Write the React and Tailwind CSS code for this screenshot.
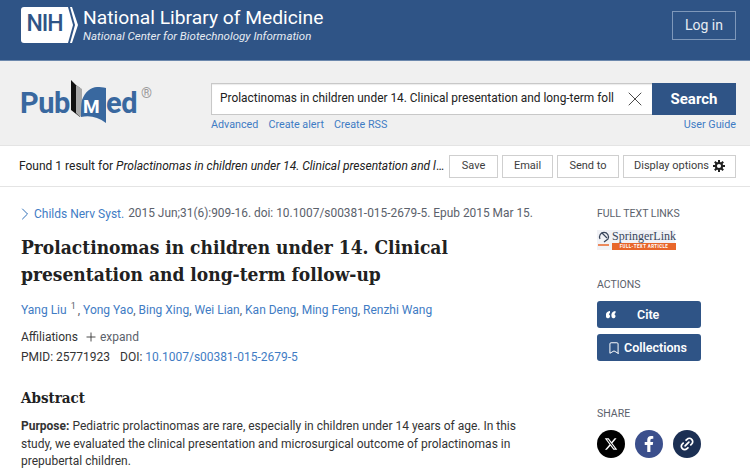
import React from "react";
import { X, Plus, ChevronRight, Bookmark, Link2 } from "lucide-react";

const sans = "font-['Roboto','Liberation_Sans',sans-serif]";
const serif = "font-['DejaVu_Serif_Condensed','DejaVu_Serif',serif]";

const authors = ["Yong Yao", "Bing Xing", "Wei Lian", "Kan Deng", "Ming Feng", "Renzhi Wang"];

const NihLogo = () => (
  <div className="flex h-[36px] w-[57px] items-stretch">
    <div className="flex w-[44px] items-center justify-center rounded-l-[3px] bg-white pl-[3px]">
      <span className="text-[23px] font-medium tracking-[-1px] text-[#2f5486]">NIH</span>
    </div>
    <svg width="14" height="36" viewBox="0 0 14 36" className="-ml-px">
      <path d="M0 0h4l5 18-5 18H0z" fill="#fff" />
      <path d="M6 0h2l6 18-6 18H6l5-18z" fill="#fff" />
    </svg>
  </div>
);

const PubMedLogo = () => (
  <div className="-ml-[1px] -mt-[3px] flex items-end text-[#39689f]">
    <span className="w-[49px] text-[29px] font-bold leading-[36px] tracking-[-0.5px]">Pub</span>
    <div className="relative -mb-[2px] h-[43px] w-[37px] shrink-0">
      <svg width="37" height="43" viewBox="0 0 37 43" className="absolute left-0 top-0">
        <path d="M2 0l5 5 4 3v29l-9-7z" fill="#111" />
        <path d="M7 5l6 4v26l-2 2-4-4z" fill="#a8a8a8" />
        <path d="M12 37c0-7 0-12 1-17 3-8 9-13 15-13 3 0 6 0 9 1v35c-8-6-16-8-25-6z" fill="#39689f" />
      </svg>
      <span className="absolute left-[14px] top-[16px] text-[19px] font-bold leading-[22px] text-white">M</span>
    </div>
    <span className="text-[29px] font-bold leading-[36px] tracking-[-0.5px]">ed</span>
    <span className="mb-[20px] ml-[4px] text-[14px] leading-[16px] text-[#9a9a9a]">®</span>
  </div>
);

const GearIcon = () => (
  <svg width="12" height="12" viewBox="0 0 12 12">
    <circle cx="6" cy="6" r="3.1" fill="none" stroke="#212121" strokeWidth="2" />
    <path d="M6 0v3M6 9v3M0 6h3M9 6h3M1.8 1.8l2 2M8.2 8.2l2 2M1.8 10.2l2-2M8.2 3.8l2-2" stroke="#212121" strokeWidth="2" />
  </svg>
);

const ToolButton = ({ children, width }) => (
  <button className={`flex h-[23px] items-center justify-center gap-[4px] border border-[#cfcfcf] bg-white text-[11px] text-[#3d3d3d] ${width}`}>
    {children}
  </button>
);

const ActionButton = ({ children }) => (
  <button className="flex h-[27px] w-[104px] items-center rounded-[3px] bg-[#2f5486] pt-px text-[12.5px] font-semibold text-white">
    {children}
  </button>
);

const SideHeading = ({ children }) => (
  <h3 className="text-[10.5px] font-normal leading-[14px] text-[#5b616b]">{children}</h3>
);

export default function App() {
  return (
    <div className={`h-[476px] w-[750px] overflow-hidden bg-white ${sans}`}>
      {/* NLM bar */}
      <header className="flex h-[61px] items-center justify-between border-b border-[#6c88ad] bg-[#2f5486] pl-[21px] pr-[14px]">
        <div className="flex items-center gap-[5px] pb-[11px]">
          <NihLogo />
          <div className="text-white">
            <div className="text-[19.25px] leading-[22px]">National Library of Medicine</div>
            <div className="text-[11.5px] italic leading-[14px] text-[#e6ebf2]">National Center for Biotechnology Information</div>
          </div>
        </div>
        <button className="mb-[10px] h-[29px] w-[64px] border border-[#7f98ba] text-[14px] text-[#e6ebf2]">Log in</button>
      </header>

      {/* Search band */}
      <section className="flex h-[85px] border-b border-[#e4e4e4] bg-[#f0f0f0] pl-[21px] pr-[14px] pt-[22px]">
        <div className="w-[190px]">
          <PubMedLogo />
        </div>
        <div className="flex-1">
          <div className="flex h-[32px]">
            <div className="flex min-w-0 flex-1 items-center overflow-hidden border-y border-l border-[#c8c8c8] bg-white pl-[8px] shadow-[inset_0_1px_1px_rgba(0,0,0,0.08)]">
              <span className="w-[396px] shrink-0 overflow-hidden whitespace-nowrap text-[11.9px] text-[#212121]">
                Prolactinomas in children under 14. Clinical presentation and long-term foll
              </span>
              <X size={24} strokeWidth={1} className="ml-[7px] shrink-0 text-[#4a4a4a]" />
            </div>
            <button className="h-[32px] w-[84px] shrink-0 bg-[#2f5486] text-[15px] font-bold text-white">Search</button>
          </div>
          <div className="mt-[3px] flex justify-between text-[10.75px] leading-[14px] text-[#3f7cc4]">
            <div className="flex gap-[10px]">
              <span>Advanced</span>
              <span>Create alert</span>
              <span>Create RSS</span>
            </div>
            <span>User Guide</span>
          </div>
        </div>
      </section>

      {/* Results toolbar */}
      <section className="flex h-[41px] items-center border-b border-[#e4e4e4] pl-[19px] pr-[14px]">
        <p className="w-[430px] shrink-0 truncate text-[12px] text-[#212121]">
          Found 1 result for <em>Prolactinomas in children under 14. Clinical presentation and long-term follow-up</em>
        </p>
        <div className="flex gap-[4px]">
          <ToolButton width="w-[49px]">Save</ToolButton>
          <ToolButton width="w-[51px]">Email</ToolButton>
          <ToolButton width="w-[62px]">Send to</ToolButton>
          <ToolButton width="w-[113px]">
            Display options <GearIcon />
          </ToolButton>
        </div>
      </section>

      <main className="flex pl-[21px]">
        {/* Article */}
        <article className="w-[576px] pt-[19px]">
          <div className="flex h-[16px] items-center whitespace-nowrap text-[12px] text-[#5b616b]">
            <ChevronRight size={20} strokeWidth={1.2} className="-ml-[6px] -mr-[1px] text-[#2f6fb8]" />
            <span className="text-[#3f7cc4]">Childs Nerv Syst.</span>
            <span className="ml-[4px] text-[11.9px]">2015 Jun;31(6):909-16. doi: 10.1007/s00381-015-2679-5. Epub 2015 Mar 15.</span>
          </div>
          <h1 className={`mt-[12px] w-[450px] text-[19px] font-bold leading-[27px] text-[#212121] ${serif}`}>
            Prolactinomas in children under 14. Clinical presentation and long-term follow-up
          </h1>
          <div className="mt-[14px] flex h-[16px] items-center whitespace-nowrap text-[12px] text-[#3f7cc4]">
            <span>Yang Liu</span>
            <sup className="ml-[2px] bg-[#f4f4f4] px-[2px] text-[9px] text-[#5b616b]">1</sup>
            {authors.map((name) => (
              <span key={name} className="whitespace-pre"><span className="text-[#5b616b]">, </span>{name}</span>
            ))}
          </div>
          <div className="mt-[11px] flex h-[15px] items-center text-[12px] text-[#333]">
            Affiliations
            <Plus size={14} strokeWidth={1.5} className="ml-[6px] mr-[2px]" />
            <span className="text-[#5b616b]">expand</span>
          </div>
          <div className="mt-[5px] flex h-[15px] items-center whitespace-nowrap text-[12px] text-[#333]">
            PMID: 25771923
            <span className="ml-[10px]">DOI:</span>
            <span className="ml-[3px] text-[#3f7cc4]">10.1007/s00381-015-2679-5</span>
          </div>
          <h2 className={`mt-[24px] text-[15px] font-bold leading-[20px] text-[#212121] ${serif}`}>Abstract</h2>
          <p className="mt-[10px] w-[505px] text-[12px] leading-[17.5px] text-[#333]">
            <strong>Purpose:</strong> Pediatric prolactinomas are rare, especially in children under 14 years of age. In this study, we evaluated the clinical presentation and microsurgical outcome of prolactinomas in prepubertal children.
          </p>
        </article>

        {/* Sidebar */}
        <aside className="pt-[20px]">
          <SideHeading>FULL TEXT LINKS</SideHeading>
          <div className="mt-[9px] flex h-[20px] w-[78px] items-stretch bg-[#f1f2f6]">
            <svg width="15" height="20" viewBox="0 0 15 20" className="shrink-0">
              <path d="M3 9a4.5 4.5 0 1 1 8 0l-4 3M5 3l5 5" fill="none" stroke="#39465c" strokeWidth="1.2" />
              <path d="M1 15h11" stroke="#e8662a" strokeWidth="1.5" />
            </svg>
            <div className="flex flex-1 flex-col items-stretch">
              <span className="font-['Liberation_Serif',serif] text-[12px] leading-[13px] text-[#39465c]">SpringerLink</span>
              <span className="h-[7px] bg-[#e8662a] text-center text-[4.5px] font-bold leading-[7px] tracking-[0.4px] text-white">FULL-TEXT ARTICLE</span>
            </div>
          </div>
          <div className="mt-[28px]">
            <SideHeading>ACTIONS</SideHeading>
          </div>
          <div className="mt-[9px] flex flex-col gap-[6px]">
            <ActionButton>
              <svg width="10" height="8" viewBox="0 0 10 8" fill="#fff" className="ml-[9px] mr-[21px]">
                <path d="M0 5a4 4 0 0 1 4-5v2a2 2 0 0 0-1 1.5A2 2 0 1 1 0 5zM5.5 5a4 4 0 0 1 4-5v2a2 2 0 0 0-1 1.5A2 2 0 1 1 5.5 5z" />
              </svg>
              Cite
            </ActionButton>
            <ActionButton>
              <Bookmark size={14} strokeWidth={1.7} className="ml-[10px] mr-[3px]" />
              Collections
            </ActionButton>
          </div>
          <div className="mt-[46px]">
            <SideHeading>SHARE</SideHeading>
          </div>
          <div className="mt-[9px] flex gap-[10px]">
            <div className="flex h-[28px] w-[28px] items-center justify-center rounded-full bg-black">
              <svg width="14" height="14" viewBox="0 0 24 24" fill="#fff">
                <path d="M18.24 2.25h3.31l-7.23 8.26 8.5 11.24H16.17l-5.21-6.82-5.97 6.82H1.68l7.73-8.84L1.25 2.25H8.08l4.71 6.23zm-1.16 17.52h1.83L7.08 4.13H5.12z" />
              </svg>
            </div>
            <div className="flex h-[28px] w-[28px] items-center justify-center rounded-full bg-[#3b4f8c]">
              <svg width="14" height="16" viewBox="0 0 320 512" fill="#fff">
                <path d="M279.14 288l14.22-92.66h-88.91v-60.13c0-25.35 12.42-50.06 52.24-50.06h40.42V6.26S260.43 0 225.36 0c-73.22 0-121.08 44.38-121.08 124.72v70.62H22.89V288h81.39v224h100.17V288z" />
              </svg>
            </div>
            <div className="flex h-[28px] w-[28px] items-center justify-center rounded-full bg-[#1b2f53]">
              <Link2 size={16} strokeWidth={2.6} className="-rotate-45 text-white" />
            </div>
          </div>
        </aside>
      </main>
    </div>
  );
}
